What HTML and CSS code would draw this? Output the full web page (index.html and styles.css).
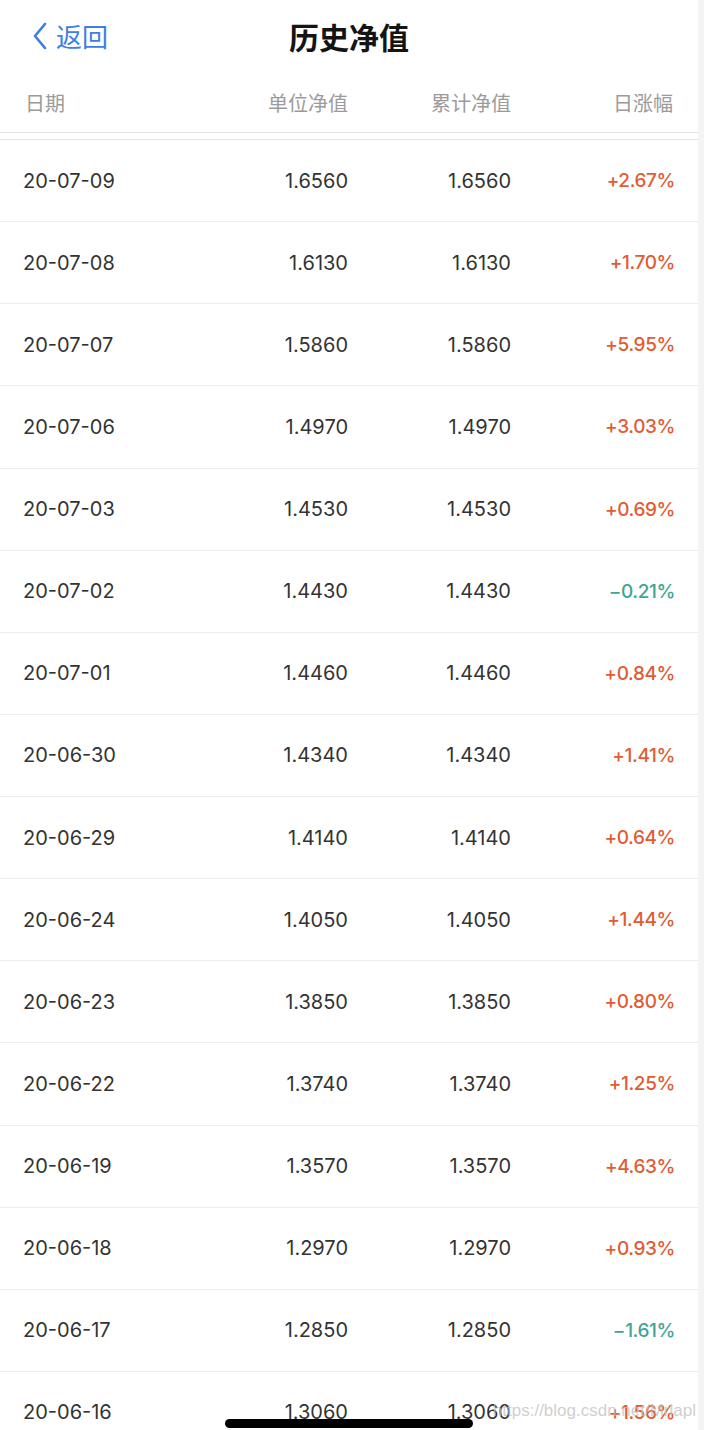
FILE: index.html
```html
<!DOCTYPE html>
<html lang="zh-CN">
<head>
<meta charset="utf-8">
<title>历史净值</title>
<link rel="stylesheet" href="styles.css">
</head>
<body>
<div class="page">
  <header class="nav">
    <a class="back">
      <svg class="chev" width="16" height="28" viewBox="0 0 16 28"><path d="M13 2 L3 14 L13 26" fill="none" stroke="#3d7de6" stroke-width="2.6" stroke-linecap="round" stroke-linejoin="round"/></svg>
      <span>返回</span>
    </a>
    <h1 class="title">历史净值</h1>
  </header>
  <div class="thead">
    <span class="c1">日期</span>
    <span class="c2">单位净值</span>
    <span class="c3">累计净值</span>
    <span class="c4">日涨幅</span>
  </div>
  <div class="list">
    <div class="row"><span class="c1">20-07-09</span><span class="c2">1.6560</span><span class="c3">1.6560</span><span class="c4 up">+2.67%</span></div>
    <div class="row"><span class="c1">20-07-08</span><span class="c2">1.6130</span><span class="c3">1.6130</span><span class="c4 up">+1.70%</span></div>
    <div class="row"><span class="c1">20-07-07</span><span class="c2">1.5860</span><span class="c3">1.5860</span><span class="c4 up">+5.95%</span></div>
    <div class="row"><span class="c1">20-07-06</span><span class="c2">1.4970</span><span class="c3">1.4970</span><span class="c4 up">+3.03%</span></div>
    <div class="row"><span class="c1">20-07-03</span><span class="c2">1.4530</span><span class="c3">1.4530</span><span class="c4 up">+0.69%</span></div>
    <div class="row"><span class="c1">20-07-02</span><span class="c2">1.4430</span><span class="c3">1.4430</span><span class="c4 down">−0.21%</span></div>
    <div class="row"><span class="c1">20-07-01</span><span class="c2">1.4460</span><span class="c3">1.4460</span><span class="c4 up">+0.84%</span></div>
    <div class="row"><span class="c1">20-06-30</span><span class="c2">1.4340</span><span class="c3">1.4340</span><span class="c4 up">+1.41%</span></div>
    <div class="row"><span class="c1">20-06-29</span><span class="c2">1.4140</span><span class="c3">1.4140</span><span class="c4 up">+0.64%</span></div>
    <div class="row"><span class="c1">20-06-24</span><span class="c2">1.4050</span><span class="c3">1.4050</span><span class="c4 up">+1.44%</span></div>
    <div class="row"><span class="c1">20-06-23</span><span class="c2">1.3850</span><span class="c3">1.3850</span><span class="c4 up">+0.80%</span></div>
    <div class="row"><span class="c1">20-06-22</span><span class="c2">1.3740</span><span class="c3">1.3740</span><span class="c4 up">+1.25%</span></div>
    <div class="row"><span class="c1">20-06-19</span><span class="c2">1.3570</span><span class="c3">1.3570</span><span class="c4 up">+4.63%</span></div>
    <div class="row"><span class="c1">20-06-18</span><span class="c2">1.2970</span><span class="c3">1.2970</span><span class="c4 up">+0.93%</span></div>
    <div class="row"><span class="c1">20-06-17</span><span class="c2">1.2850</span><span class="c3">1.2850</span><span class="c4 down">−1.61%</span></div>
    <div class="row"><span class="c1">20-06-16</span><span class="c2">1.3060</span><span class="c3">1.3060</span><span class="c4 up">+1.56%</span></div>
  </div>
</div>
<div class="watermark">https://blog.csdn.net/Mrlapl</div>
<div class="home-indicator"></div>
</body>
</html>
```
FILE: styles.css
```css
html, body {
  margin: 0;
  padding: 0;
}
body {
  background: #f4f4f4;
  height: 1430px;
  overflow: hidden;
  font-family: Inter, "Noto Sans CJK SC", sans-serif;
}
.page {
  width: 698px;
  height: 1430px;
  background: #ffffff;
  overflow: hidden;
}
.nav {
  position: relative;
  height: 72px;
  display: flex;
  align-items: center;
  justify-content: center;
}
.back {
  position: absolute;
  left: 32px;
  top: 21px;
  display: flex;
  align-items: center;
  gap: 8px;
  color: #3d7de6;
  font-family: "Noto Sans CJK SC", sans-serif;
  font-size: 26px;
  line-height: 30px;
}
.chev {
  display: block;
}
.title {
  margin: 0;
  font-family: "Noto Sans CJK SC", sans-serif;
  font-size: 30px;
  font-weight: 700;
  color: #141414;
  line-height: 72px;
}
.thead, .row {
  display: grid;
  grid-template-columns: 160px 164px 163px 162px;
  padding-left: 24px;
  align-items: center;
}
.thead {
  height: 60px;
  border-bottom: 1px solid #e2e2e6;
  font-family: "Noto Sans CJK SC", sans-serif;
  font-size: 20px;
  color: #9b9b9b;
}
.thead .c1 {
  padding-left: 1px;
}
.list {
  margin-top: 6px;
  border-top: 1px solid #e6e6ea;
}
.row {
  height: 81.13px;
  border-bottom: 1px solid #ececec;
  font-size: 20px;
  color: #333333;
}
.row .c1 {
  margin-left: -1px;
}
.c2, .c3, .c4 {
  text-align: right;
}
.row .c4 {
  font-size: 19px;
  font-weight: 500;
  letter-spacing: -0.4px;
  margin-right: -2px;
}
.up {
  color: #e15b33;
}
.down {
  color: #41a592;
}
.watermark {
  position: absolute;
  right: 8px;
  top: 1401px;
  font-family: "Liberation Sans", sans-serif;
  font-size: 17px;
  color: rgba(190, 190, 190, 0.75);
}
.home-indicator {
  position: absolute;
  left: 225px;
  top: 1419px;
  width: 248px;
  height: 9px;
  border-radius: 5px;
  background: #000000;
}
```
